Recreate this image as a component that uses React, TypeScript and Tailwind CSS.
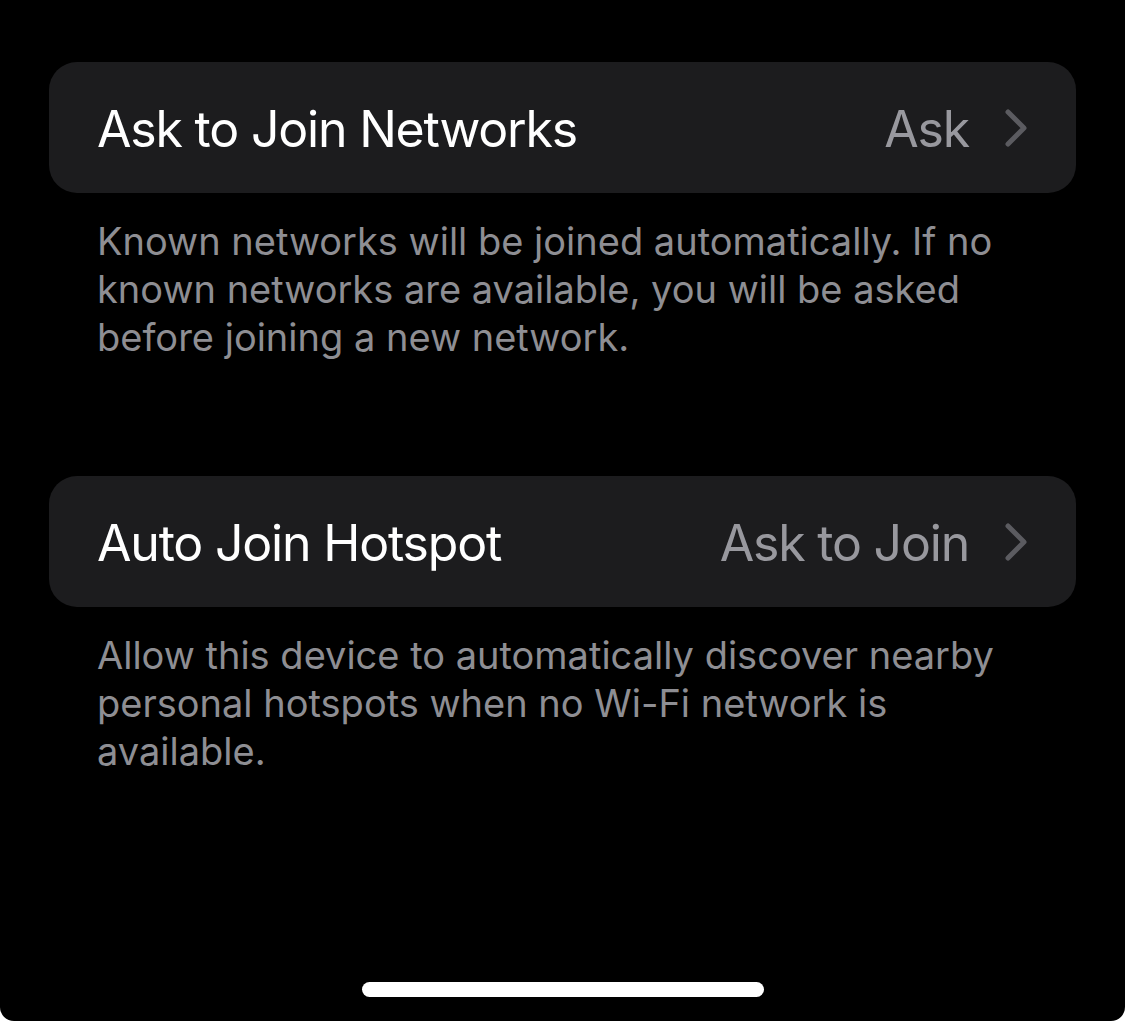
import React from "react";

function Chevron() {
  return (
    <svg width="24" height="38" viewBox="0 0 24 38" fill="none" className="shrink-0">
      <polyline
        points="4,3 20,19 4,35"
        stroke="#5b5b60"
        strokeWidth="5"
        strokeLinecap="round"
        strokeLinejoin="round"
      />
    </svg>
  );
}

interface Section {
  title: string;
  value: string;
  lines: string[];
}

const sections: Section[] = [
  {
    title: "Ask to Join Networks",
    value: "Ask",
    lines: [
      "Known networks will be joined automatically. If no",
      "known networks are available, you will be asked",
      "before joining a new network.",
    ],
  },
  {
    title: "Auto Join Hotspot",
    value: "Ask to Join",
    lines: [
      "Allow this device to automatically discover nearby",
      "personal hotspots when no Wi-Fi network is",
      "available.",
    ],
  },
];

export default function App() {
  return (
    <div className="w-[1125px] h-[1021px] bg-white">
      <div
        className="w-full h-full bg-black rounded-b-[14px] flex flex-col px-[49px] pt-[62px] pb-[24px]"
        style={{ fontFamily: "Inter, 'Noto Sans', sans-serif" }}
      >
        <div className="flex flex-col gap-[115px]">
          {sections.map((s) => (
            <div key={s.title}>
              <div className="h-[131px] rounded-[28px] bg-[#1c1c1e] flex items-center justify-between pl-[48px] pr-[48px]">
                <span className="text-white text-[50px] tracking-[-1.2px] leading-none pt-[2px]">{s.title}</span>
                <div className="flex items-center gap-[35px]">
                  <span className="text-[#98989e] text-[50px] tracking-[-1.2px] leading-none pt-[2px]">{s.value}</span>
                  <Chevron />
                </div>
              </div>
              <div className="mt-[24px] px-[48px] text-[38px] leading-[48px] text-[#8e8e93]">
                {s.lines.map((l) => (
                  <div key={l} className="whitespace-nowrap">{l}</div>
                ))}
              </div>
            </div>
          ))}
        </div>
        <div className="mt-auto flex justify-center">
          <div className="w-[402px] h-[15px] rounded-full bg-white" />
        </div>
      </div>
    </div>
  );
}
